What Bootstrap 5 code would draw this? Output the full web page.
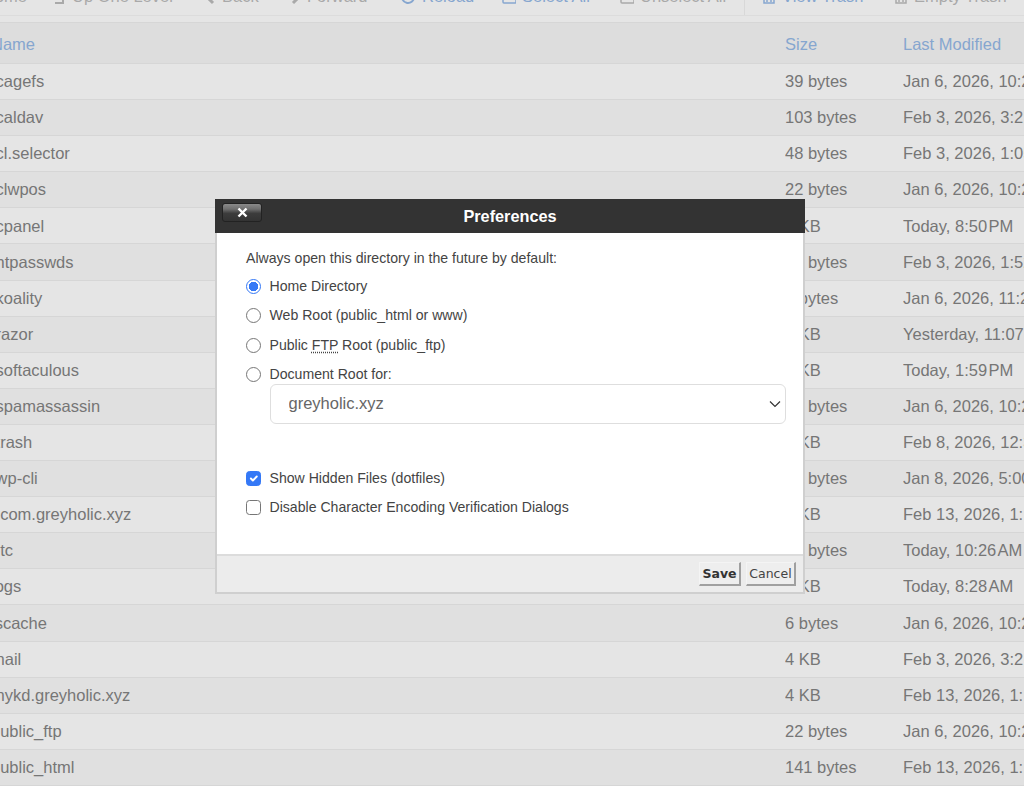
<!DOCTYPE html>
<html lang="en">
<head>
  <meta charset="UTF-8" />
  <meta name="viewport" content="width=device-width, initial-scale=1" />
  <title>File Manager</title>
  <link href="https://cdn.jsdelivr.net/npm/bootstrap@5.3.3/dist/css/bootstrap.min.css" rel="stylesheet" />
  <style>
    html, body { height: 100%; overflow: hidden; }
    body { background: #e5e5e5; color: #767676; font-family: "Liberation Sans", Arial, sans-serif; font-size: 16.5px; }
    .fm-page { margin: -14px 0 0 -9px; width: 1200px; }
    .fm-toolbar { height: 30px; border-bottom: 1px solid #dcdcdc; margin-bottom: 6px; position: relative; }
    .fm-tool { position: absolute; bottom: 0; top: 0; display: flex; align-items: center; gap: 6px; color: #a9a9a9; white-space: nowrap; line-height: 1; padding-bottom: 8px; }
    .fm-tool.fm-on { color: #86a6cf; }
    .fm-tool svg { flex: none; }
    .fm-sep { position: absolute; top: 0; bottom: 0; left: 753px; border-left: 1px solid #d8d8d8; }
    .fm-table { table-layout: fixed; width: 1200px; margin: 0; --bs-table-bg: transparent; border-top: 1px solid #d6d6d6; color: #767676; }
    .fm-table th, .fm-table td { padding: 0; font-weight: 400; vertical-align: middle; white-space: nowrap; overflow: hidden; border-bottom: 1px solid #d6d6d6; color: #767676; box-shadow: none; background: transparent; }
    .fm-table thead tr { height: 41px; background: #dddddd; }
    .fm-table thead th { color: #86a6cf; padding-top: 2px; }
    .fm-table tbody tr { height: 36.1px; }
    .fm-table tbody tr:nth-child(even) { background: #e0e0e0; }
    .fm-col-name { width: 794px; }
    .fm-col-size { width: 118px; }
    .fm-nb { letter-spacing: -2px; }
    .fm-dialog { position: absolute; left: 215px; top: 199px; width: 590px; height: 395px; display: flex; flex-direction: column; background: #fff; border: 2px solid #cfcfcf; border-top: 0; border-radius: 0; box-shadow: none; color: #444; font-size: 14.1px; }
    .fm-dialog .modal-header { height: 34px; flex: none; margin: 0 -2px; padding: 0; background: #333; border: 0; border-radius: 0; position: relative; justify-content: center; }
    .fm-dialog .modal-title { color: #fff; font-size: 16.3px; font-weight: 700; line-height: 34px; }
    .fm-close { position: absolute; left: 7px; top: 4px; width: 40px; height: 19px; padding: 0; border: 1px solid #222; border-radius: 3px; background: linear-gradient(#8a8a8a 0, #6f6f6f 30%, #3c3c3c 55%, #333 100%); color: #fff; display: flex; align-items: center; justify-content: center; }
    .fm-dialog .modal-body { padding: 17px 29px 0; flex: 1; }
    .fm-lead { margin: 0 0 12px; line-height: 16px; height: 16px; }
    .fm-check { min-height: 0; height: 29.4px; margin: 0; padding-left: 23.5px; display: flex; align-items: flex-start; line-height: 16px; }
    .fm-check .form-check-input { width: 15px; height: 15px; margin: 0 0 0 -23.5px; margin-top: 1px; float: none; flex: none; border: 1px solid #767676; }
    .fm-check .form-check-input:checked { background-color: #3478f6; border-color: #3478f6; }
    .fm-check .form-check-input[type=radio]:checked { background-color: #fff; background-image: radial-gradient(circle, #3478f6 0 4.5px, #fff 5px); }
    .fm-check .form-check-label { margin-left: 8.5px; }
    .fm-abbr { text-decoration: underline dotted; text-underline-offset: 2px; }
    .fm-select { margin: -12px 0 0 23.5px; width: 516px; height: 40px; color: #666; font-family: "Liberation Sans", Arial, sans-serif; font-size: 16.5px; padding: 0 30px 0 18px; border: 1px solid #dedede; border-radius: 6px; background-image: url("data:image/svg+xml,%3csvg xmlns='http://www.w3.org/2000/svg' viewBox='0 0 12 8'%3e%3cpath fill='none' stroke='%23333' stroke-width='1.2' d='M1 1.5l5 5 5-5'/%3e%3c/svg%3e"); background-size: 12px 8px; background-position: right 4px center; }
    .fm-gap { height: 46px; }
    .fm-dialog .modal-footer { height: 38px; flex: none; padding: 0 7px 0 0; background: #ececec; border-top: 2px solid #dcdcdc; border-radius: 0; gap: 5px; justify-content: flex-end; align-items: center; }
    .fm-btn { margin: 0; padding: 1px 0 0; height: 24px; background: #eee; border-style: solid; border-width: 1px 2px 2px 1px; border-color: #f4f4f4 #a0a0a0 #a0a0a0 #f4f4f4; border-radius: 0; font-family: "DejaVu Sans", Verdana, sans-serif; font-size: 12.5px; line-height: 1; color: #333; }
    .fm-save { width: 42px; font-weight: 700; }
    .fm-cancel { width: 50px; color: #444; }
  </style>
</head>
<body>
  <div class="fm-page">
    <div class="fm-toolbar">
      <span class="fm-tool" style="left:-8px">Home</span>
      <span class="fm-tool" style="left:59px"><svg width="16" height="16" viewBox="0 0 16 16" fill="none" stroke="currentColor" stroke-width="2"><path d="M5 14h8V3"/></svg>Up One Level</span>
      <span class="fm-tool" style="left:211px"><svg width="14" height="16" viewBox="0 0 14 16" fill="none" stroke="currentColor" stroke-width="3"><path d="M11 2 5 8l6 6"/></svg>Back</span>
      <span class="fm-tool" style="left:296px"><svg width="14" height="16" viewBox="0 0 14 16" fill="none" stroke="currentColor" stroke-width="3"><path d="m6 2 6 6-6 6"/></svg>Forward</span>
      <span class="fm-tool fm-on" style="left:409px"><svg width="16" height="16" viewBox="0 0 16 16" fill="none" stroke="currentColor" stroke-width="2"><path d="M14 8a6 6 0 1 1-2-4.5"/></svg>Reload</span>
      <span class="fm-tool fm-on" style="left:511px"><svg width="14" height="16" viewBox="0 0 14 16" fill="none" stroke="currentColor" stroke-width="1.5"><rect x="1" y="2" width="13" height="12" rx="1"/></svg>Select All</span>
      <span class="fm-tool" style="left:629px"><svg width="14" height="16" viewBox="0 0 14 16" fill="none" stroke="currentColor" stroke-width="1.5"><rect x="1" y="2" width="13" height="12" rx="1"/></svg>Unselect All</span>
      <span class="fm-sep"></span>
      <span class="fm-tool fm-on" style="left:771px"><svg width="14" height="16" viewBox="0 0 14 16" fill="none" stroke="currentColor" stroke-width="1.5"><path d="M2 3v11h10V3M5 5v8M9 5v8"/></svg>View Trash</span>
      <span class="fm-tool" style="left:903px"><svg width="14" height="16" viewBox="0 0 14 16" fill="none" stroke="currentColor" stroke-width="1.5"><path d="M2 3v11h10V3M5 5v8M9 5v8"/></svg>Empty Trash</span>
    </div>
    <table class="table fm-table">
      <thead>
        <tr><th class="fm-col-name">Name</th><th class="fm-col-size">Size</th><th>Last Modified</th></tr>
      </thead>
      <tbody>
        <tr><td>.cagefs</td><td>39 bytes</td><td>Jan 6, 2026, 10:26 AM</td></tr>
        <tr><td>.caldav</td><td>103 bytes</td><td>Feb 3, 2026, 3:21 PM</td></tr>
        <tr><td>.cl.selector</td><td>48 bytes</td><td>Feb 3, 2026, 1:05 PM</td></tr>
        <tr><td>.clwpos</td><td>22 bytes</td><td>Jan 6, 2026, 10:26 AM</td></tr>
        <tr><td>.cpanel</td><td>4 KB</td><td>Today, 8:50<span class="fm-nb">&#8239;</span>PM</td></tr>
        <tr><td>.htpasswds</td><td>22 bytes</td><td>Feb 3, 2026, 1:52 PM</td></tr>
        <tr><td>.koality</td><td>9 bytes</td><td>Jan 6, 2026, 11:24 AM</td></tr>
        <tr><td>.razor</td><td>4 KB</td><td>Yesterday, 11:07 PM</td></tr>
        <tr><td>.softaculous</td><td>4 KB</td><td>Today, 1:59<span class="fm-nb">&#8239;</span>PM</td></tr>
        <tr><td>.spamassassin</td><td>22 bytes</td><td>Jan 6, 2026, 10:26 AM</td></tr>
        <tr><td>.trash</td><td>4 KB</td><td>Feb 8, 2026, 12:30 PM</td></tr>
        <tr><td>.wp-cli</td><td>22 bytes</td><td>Jan 8, 2026, 5:00 PM</td></tr>
        <tr><td>ecom.greyholic.xyz</td><td>4 KB</td><td>Feb 13, 2026, 1:10 PM</td></tr>
        <tr><td>etc</td><td>22 bytes</td><td>Today, 10:26<span class="fm-nb">&#8239;</span>AM</td></tr>
        <tr><td>logs</td><td>4 KB</td><td>Today, 8:28<span class="fm-nb">&#8239;</span>AM</td></tr>
        <tr><td>lscache</td><td>6 bytes</td><td>Jan 6, 2026, 10:26 AM</td></tr>
        <tr><td>mail</td><td>4 KB</td><td>Feb 3, 2026, 3:21 PM</td></tr>
        <tr><td>mykd.greyholic.xyz</td><td>4 KB</td><td>Feb 13, 2026, 1:10 PM</td></tr>
        <tr><td>public_ftp</td><td>22 bytes</td><td>Jan 6, 2026, 10:26 AM</td></tr>
        <tr><td>public_html</td><td>141 bytes</td><td>Feb 13, 2026, 1:10 PM</td></tr>
      </tbody>
    </table>
  </div>

  <div class="modal-content fm-dialog">
    <div class="modal-header">
      <button type="button" class="fm-close" aria-label="Close"><svg width="11" height="11" viewBox="0 0 11 11" stroke="#fff" stroke-width="2.4"><path d="M1.5 1.5l8 8M9.5 1.5l-8 8"/></svg></button>
      <h5 class="modal-title">Preferences</h5>
    </div>
    <div class="modal-body">
      <p class="fm-lead">Always open this directory in the future by default:</p>
      <div class="form-check fm-check"><input class="form-check-input" type="radio" name="fmDir" id="dirHome" checked /><label class="form-check-label" for="dirHome">Home Directory</label></div>
      <div class="form-check fm-check"><input class="form-check-input" type="radio" name="fmDir" id="dirWeb" /><label class="form-check-label" for="dirWeb">Web Root (public_html or www)</label></div>
      <div class="form-check fm-check"><input class="form-check-input" type="radio" name="fmDir" id="dirFtp" /><label class="form-check-label" for="dirFtp">Public <span class="fm-abbr">FTP</span> Root (public_ftp)</label></div>
      <div class="form-check fm-check"><input class="form-check-input" type="radio" name="fmDir" id="dirDoc" /><label class="form-check-label" for="dirDoc">Document Root for:</label></div>
      <select class="form-select fm-select"><option>greyholic.xyz</option></select>
      <div class="fm-gap"></div>
      <div class="form-check fm-check"><input class="form-check-input" type="checkbox" id="showHidden" checked /><label class="form-check-label" for="showHidden">Show Hidden Files (dotfiles)</label></div>
      <div class="form-check fm-check"><input class="form-check-input" type="checkbox" id="noEnc" /><label class="form-check-label" for="noEnc">Disable Character Encoding Verification Dialogs</label></div>
    </div>
    <div class="modal-footer">
      <button type="button" class="fm-btn fm-save">Save</button>
      <button type="button" class="fm-btn fm-cancel">Cancel</button>
    </div>
  </div>

  <script src="https://cdn.jsdelivr.net/npm/bootstrap@5.3.3/dist/js/bootstrap.bundle.min.js"></script>
</body>
</html>
